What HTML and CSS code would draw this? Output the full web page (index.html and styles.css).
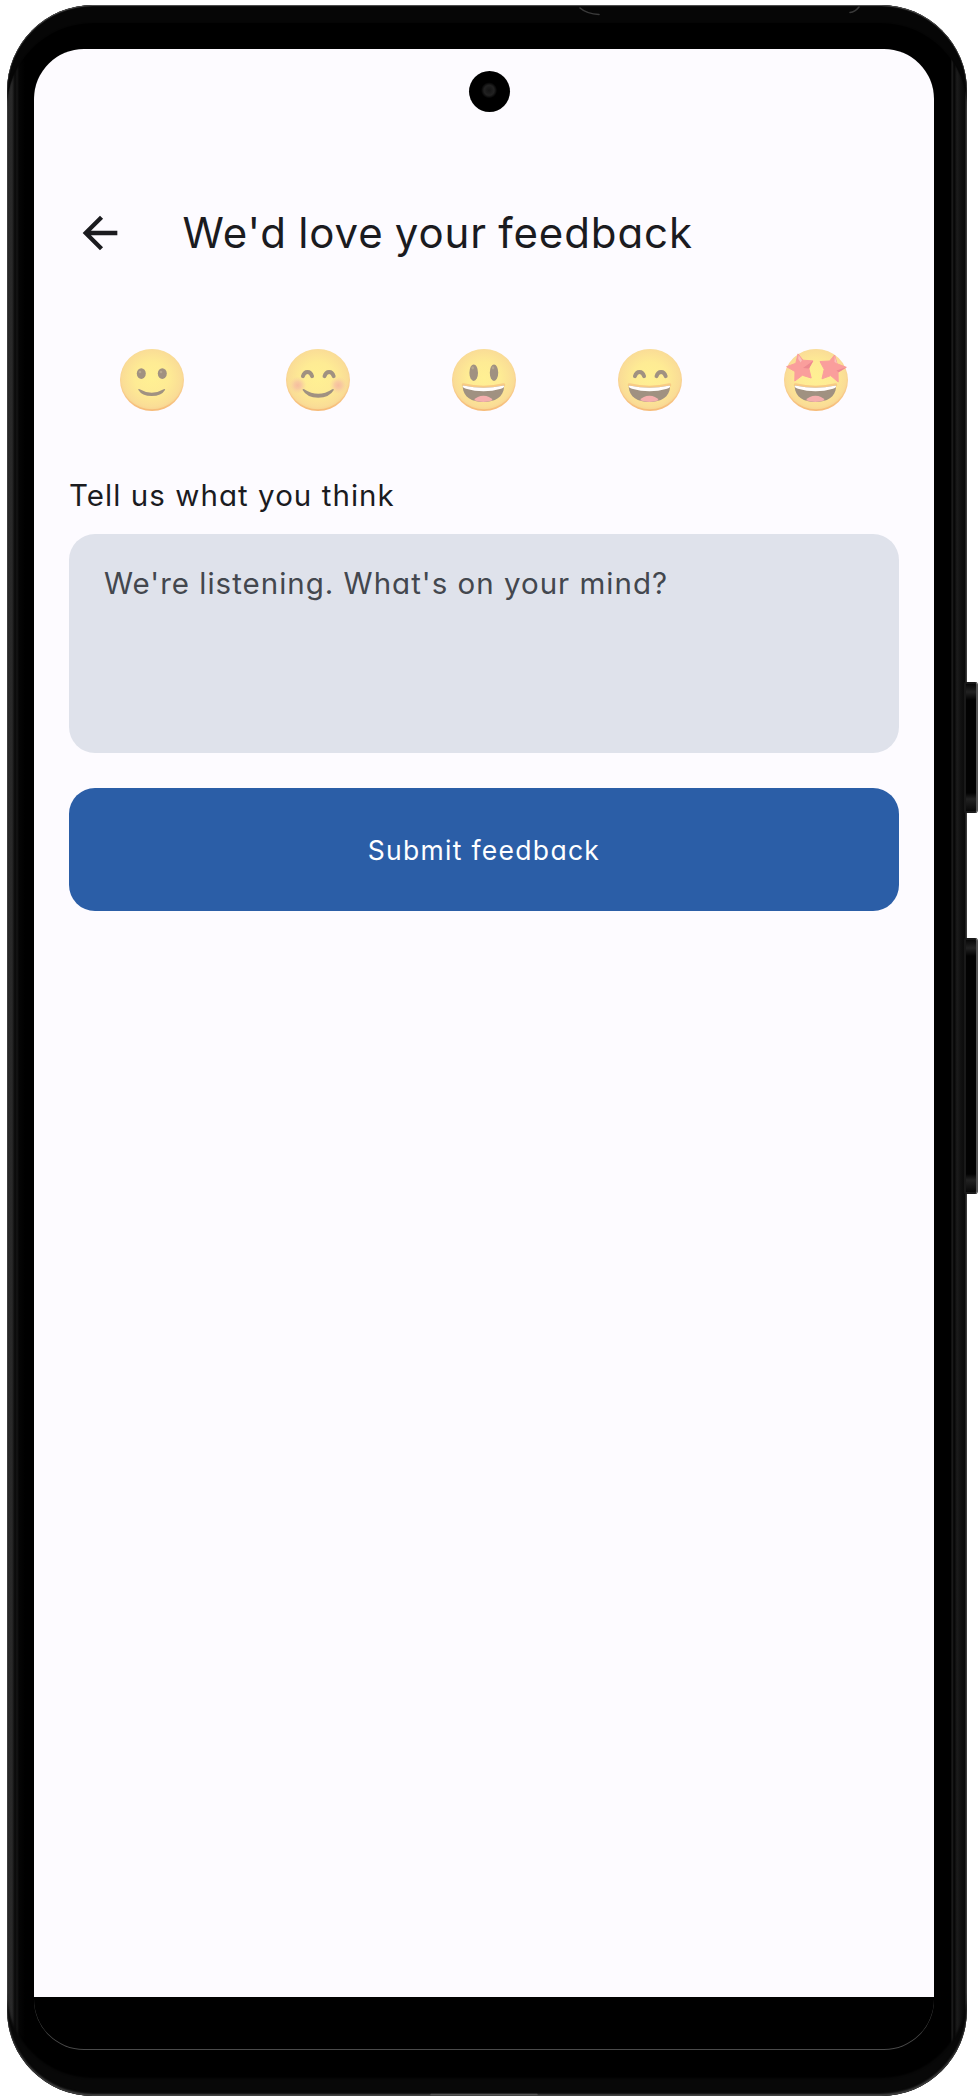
FILE: index.html
```html
<!DOCTYPE html>
<html lang="en">
<head>
<meta charset="utf-8">
<title>Feedback</title>
<link rel="stylesheet" href="styles.css">
</head>
<body>
<svg class="defs" width="0" height="0" aria-hidden="true">
  <defs>
    <radialGradient id="skin" cx=".5" cy=".48" r=".54">
      <stop offset="0" stop-color="#fff093"/><stop offset=".5" stop-color="#feeb94"/><stop offset=".88" stop-color="#fadd96"/><stop offset="1" stop-color="#f8d28f"/>
    </radialGradient>
    <radialGradient id="blush"><stop offset="0" stop-color="#f6bd9e"/><stop offset=".4" stop-color="#f7c6a1" stop-opacity=".85"/><stop offset="1" stop-color="#f9d79c" stop-opacity="0"/></radialGradient>
    <linearGradient id="rim" x1="0" y1="0" x2="0" y2="1"><stop offset="0" stop-color="#f8dfa0"/><stop offset=".6" stop-color="#f9cf91"/><stop offset="1" stop-color="#f6bb78"/></linearGradient>
    <g id="face"><ellipse cx="32" cy="31" rx="32" ry="31" fill="url(#rim)"/><ellipse cx="31.9" cy="30.4" rx="31.2" ry="29.9" fill="url(#skin)"/></g>
    <g id="grin">
      <path d="M11.4 36Q31.5 40.7 51.6 36" fill="none" stroke="#f8cb85" stroke-width="3.4" stroke-linecap="round"/>
      <path d="M10.7 38Q10.5 36.3 12.5 36.7Q31.5 40.6 50.5 36.7Q52.3 36.3 52.1 38C51.5 48 43 53 31.4 53S11.3 48 10.7 38Z" fill="#a09181"/>
      <path d="M10.7 38Q10.5 36.3 12.5 36.7Q31.5 40.6 50.5 36.7Q52.3 36.3 52.1 38Q51 39 49 39.7Q31.5 44.8 14 39.7Q12 39 10.7 38Z" fill="#fffdfc"/>
      <path d="M22 51.3Q25 46.8 31.4 46.8T40.8 51.3Q36.5 53 31.4 53T22 51.3Z" fill="#f5afae"/>
    </g>
    <g id="happy" fill="none" stroke="#a09181" stroke-width="3.9" stroke-linecap="round"><path d="M16.9 27.2C18.5 21.5 24.5 21.5 26.1 27.2"/><path d="M38.5 27.2C40.1 21.5 46.1 21.5 47.7 27.2"/></g>
  </defs>
</svg>
<div class="phone">
  <svg class="glints" viewBox="0 0 960 2091" aria-hidden="true"><g fill="none" stroke="#3a3a3a" stroke-linecap="round"><path d="M573 3Q580 9 592 9.5" stroke-width="1.6"/><path d="M852 2Q848 7 843 7.5" stroke-width="1.6"/><path d="M424 2089.5H530" stroke-width="1.5" stroke="#555"/></g></svg>
  <span class="key key-power"></span>
  <span class="key key-volume"></span>
  <main class="screen">
    <span class="camera"></span>
    <header class="bar">
      <svg class="back" viewBox="0 0 24 24"><path d="M20 11H7.83l5.59-5.59L12 4l-8 8 8 8 1.41-1.41L7.83 13H20v-2z"/></svg>
      <h1 class="title">We'd love your feedback</h1>
    </header>
    <div class="ratings">
      <svg class="emoji" viewBox="0 0 64 62"><use href="#face"/><g fill="#a09181"><ellipse cx="21.3" cy="24.6" rx="4.5" ry="5.3"/><ellipse cx="42.3" cy="24.6" rx="4.5" ry="5.3"/><path d="M18.2 40.7Q18.3 39.6 19.7 40.2Q31.7 47.2 43.7 40.2Q45.1 39.6 45.2 40.7Q41.5 47 31.7 47T18.2 40.7Z"/></g><g fill="#b5a68f"><circle cx="20" cy="23" r="1.3"/><circle cx="41" cy="23" r="1.3"/></g></svg>
      <svg class="emoji" viewBox="0 0 64 62"><use href="#face"/><circle cx="11.7" cy="36.3" r="9" fill="url(#blush)"/><circle cx="52.3" cy="36.3" r="9" fill="url(#blush)"/><use href="#happy"/><path d="M16.6 41Q16.5 39.4 18.2 40.2Q32.2 49.4 46.2 40.2Q47.9 39.4 47.8 41Q43.5 48.7 32.2 48.7T16.6 41Z" fill="#a09181"/></svg>
      <svg class="emoji" viewBox="0 0 64 62"><use href="#face"/><g fill="#a09181"><ellipse cx="21.7" cy="23.7" rx="4.3" ry="8.3"/><ellipse cx="42" cy="23.7" rx="4.2" ry="8.3"/></g><g fill="#b5a68f"><ellipse cx="20.7" cy="18.8" rx="1.3" ry="1.6"/><ellipse cx="41" cy="18.8" rx="1.3" ry="1.6"/></g><use href="#grin"/></svg>
      <svg class="emoji" viewBox="0 0 64 62"><use href="#face"/><use href="#happy"/><use href="#grin"/></svg>
      <svg class="emoji" viewBox="0 0 64 62"><use href="#face"/><use href="#grin"/><g fill="#fa9e9c" stroke="#fa9e9c" stroke-width="1" stroke-linejoin="round"><path d="M14 4.9L19 11.2L29 11.9L24.7 18.8L27.2 29L18.4 26.3L10.8 32L11 22.5L2.6 17.7L11.8 14.3Z"/><path d="M50.6 6L53 14.7L62.3 18.3L54 23.3L54.2 33L46.7 26.6L38 29.8L40.2 20.3L36 12.5L45.7 12Z"/></g><path d="M19 19L29.2 11.7L25.2 19.5ZM52.5 21.5L62.5 18.3L54.5 23.3Z" fill="#ed8990"/><path d="M14.6 6L18 11.3L16.7 13.5L14.2 10ZM50.7 7L53 14.5L50.5 13Z" fill="#fbc1bd"/></svg>
    </div>
    <form class="form">
      <label class="label" for="message">Tell us what you think</label>
      <div class="field" id="message"><span class="placeholder">We're listening. What's on your mind?</span></div>
      <div class="submit" role="button"><span class="submit-text">Submit feedback</span></div>
    </form>
  </main>
</div>
</body>
</html>
```
FILE: styles.css
```css
* { box-sizing: border-box; }
body {
  margin: 0;
  padding: 5px 11px 4px 7px;
  height: 2100px;
  background: #fff;
  font-family: Inter, "Open Sans", sans-serif;
  font-feature-settings: "cv11";
}
.defs { position: absolute; }
.phone {
  position: relative;
  height: 2091px;
  padding: 44px 33px 46px 27px;
  border-radius: 86px;
  background: linear-gradient(90deg, #777 0, #2a2a2a 1px, #292929 5px, #080808 8px, #151515 10px, #050505 12px, #000 18px, #000 944px, #222 945px, #030303 947px, #1c1c1c 950px, #101010 954px, #0a0a0a 958px, #666 960px);
  box-shadow: inset 0 1px 1px #555, inset 0 -2px 2px #444, inset 0 18px 1px #060606, inset 0 -18px 2px #080808;
}
.glints { position: absolute; left: 0; top: 0; width: 960px; height: 2091px; }
.screen {
  position: relative;
  height: 2001px;
  padding: 135px 35px 0;
  border-radius: 50px;
  background: linear-gradient(#fdfbff 1948px, #000 1948px);
  box-shadow: inset 0 -1px 0 #4a4a4a;
}
.camera {
  position: absolute;
  left: 435px;
  top: 22px;
  width: 41px;
  height: 41px;
  border-radius: 50%;
  background: radial-gradient(circle at 49% 47%, #151515 0, #222 5px, #0c0c0c 7px, #000 8px);
}
.key {
  position: absolute;
  left: 957px;
  width: 14px;
  border: 2px solid #191919;
  border-right-color: #555;
  border-radius: 2px 3px 3px 2px;
  background: linear-gradient(#080808, #222 8px, #020202 16px, #020202 calc(100% - 18px), #222 calc(100% - 12px), #080808);
}
.key-power { top: 677px; height: 131px; }
.key-volume { top: 933px; height: 256px; }
.bar { display: flex; align-items: center; height: 97px; }
.back { width: 52px; height: 52px; margin-left: 4.5px; fill: #1b1b1f; }
.title {
  margin: 0 0 0 57px;
  font-size: 42px;
  font-weight: 400;
  line-height: 60px;
  letter-spacing: 0.9px;
  word-spacing: -1.5px;
  white-space: nowrap;
  color: #1b1b1f;
}
.ratings { display: flex; margin-top: 68px; }
.emoji { flex: 1; height: 62px; min-width: 0; }
.form { display: flex; flex-direction: column; }
.label {
  margin-top: 62px;
  height: 44px;
  line-height: 44px;
  font-size: 29.5px;
  font-weight: 400;
  letter-spacing: 1.05px;
  color: #1b1b1f;
}
.field {
  height: 219px;
  margin-top: 17px;
  padding: 27px 35px;
  border-radius: 26px;
  background: #dfe2eb;
}
.placeholder { font-size: 29.5px; letter-spacing: 1px; line-height: 44px; color: #43474e; white-space: nowrap; }
.submit {
  display: flex;
  align-items: center;
  justify-content: center;
  height: 123px;
  margin-top: 35px;
  border-radius: 26px;
  background: #2b5ea7;
}
.submit-text { font-size: 26.5px; letter-spacing: 1.3px; line-height: 38px; color: #fff; }
```
